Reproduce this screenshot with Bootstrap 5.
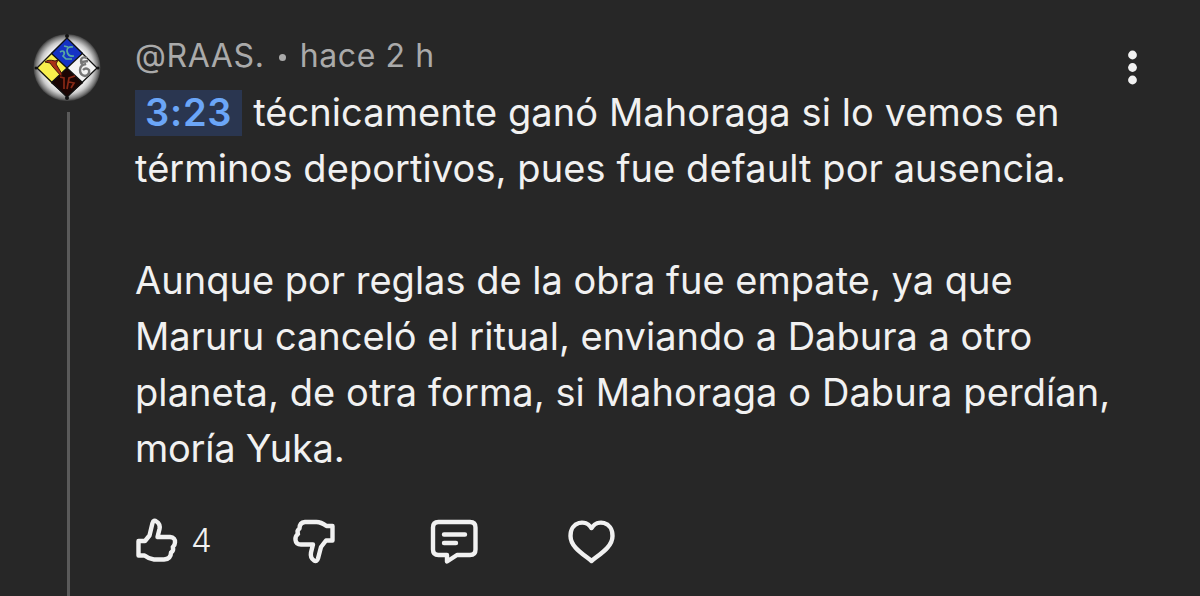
<!DOCTYPE html>
<html lang="es">
<head>
    <meta charset="UTF-8" />
    <meta name="viewport" content="width=device-width, initial-scale=1" />
    <title>Comentario</title>
    <link href="https://cdn.jsdelivr.net/npm/bootstrap@5.3.0/dist/css/bootstrap.min.css" rel="stylesheet" />
    <style>
        body {
            background: #272727;
            color: #f1f1f1;
            font-family: Inter, "Liberation Sans", sans-serif;
            overflow: hidden;
        }
        .comment { height: 596px; }
        .side { width: 135px; padding: 33px 0 0 33px; }
        .avatar { width: 70px; height: 70px; display: block; }
        .thread { width: 3px; margin: 9px 0 0 34px; background: #5a5a5a; }
        .byline {
            height: 50px;
            margin-top: 31px;
            font-size: 32px;
            line-height: 50px;
            letter-spacing: .6px;
            color: #aaa;
        }
        .dot { display: inline-block; width: 7px; height: 7px; margin: 0 4px 6px 5px; border-radius: 50%; background: #aaa; }
        .message { margin-top: 3px; font-size: 38px; line-height: 56px; white-space: nowrap; letter-spacing: .08px; }
        .message .even { letter-spacing: 0; }
        .message .tight { letter-spacing: -.25px; }
        .stamp {
            display: inline-block;
            height: 46px;
            line-height: 44px;
            padding: 0 10px;
            background: #2a3650;
            color: #6ba6f8;
            font-weight: 600;
            letter-spacing: .8px;
            text-decoration: none;
        }
        .actions { margin-top: 34px; height: 60px; }
        .actions svg {
            display: block;
            fill: none;
            stroke: #f1f1f1;
            stroke-width: 4.4;
            stroke-linejoin: round;
            stroke-linecap: round;
        }
        .likes { font-size: 33px; font-weight: 300; line-height: 61px; width: 82px; padding-left: 12px; }
        .more { width: 72px; padding-top: 46px; }
    </style>
</head>
<body>

<div class="comment d-flex">

    <div class="side d-flex flex-column flex-shrink-0">
        <svg class="avatar" viewBox="0 0 70 70">
            <defs>
                <radialGradient id="glow">
                    <stop offset=".62" stop-color="#fff" />
                    <stop offset=".8" stop-color="#c9c9c9" />
                    <stop offset=".93" stop-color="#777" />
                    <stop offset="1" stop-color="#3c3c3c" />
                </radialGradient>
            </defs>
            <circle cx="34" cy="34.500" r="33.500" fill="url(#glow)" />
            <path d="M34 5 50 20 34 35 18 20Z" fill="#1532c4" />
            <path d="M18 20 34 35 18 50 4 35Z" fill="#f8ef4c" />
            <path d="M50 20 64 35 50 50 34 35Z" fill="#f4f4f4" />
            <path d="M34 35 50 50 34 64 18 50Z" fill="#1b0503" />
            <path d="M34 5 64 35 34 64 4 35ZM18 20 50 50M50 20 18 50" fill="none" stroke="#111" stroke-width="1.300" />
            <path d="M40 14q-6-1-6 4 1 6 7 5M27 19q3-2 4 0t-1 4l3 3 6 0M31 13l4 1" fill="none" stroke="#5aa9a0" stroke-width="1.700" />
            <path d="M12 29q3-3 10-1l3-1-2 4 6 10-1 2-8-9-3-4Z" fill="#a93217" stroke="#42150c" />
            <path d="M54 25q-6-2-6 3t5 3q-6 1-6 6t5 6q5-1 4-6-3-3-6 0M49 29l6-1" fill="none" stroke="#777" stroke-width="2.400" />
            <path d="M27 44l4 1v11M42 43l-6 2-2 11M36 49l5 1-3 5" fill="none" stroke="#882916" stroke-width="1.700" />
            <g fill="#111">
                <circle cx="34" cy="3" r="2" />
                <circle cx="34" cy="65" r="2" />
                <circle cx="3" cy="35" r="1.500" />
                <circle cx="65" cy="35" r="1.500" />
            </g>
        </svg>
        <div class="thread flex-grow-1"></div>
    </div>

    <div class="flex-grow-1">
        <div class="byline">@RAAS. <span class="dot"></span> hace 2 h</div>

        <div class="message">
            <div><a class="stamp" href="#">3:23</a> técnicamente ganó Mahoraga si lo vemos en</div>
            <div>términos deportivos, pues fue default por ausencia.</div>
            <br>
            <div class="even">Aunque por reglas de la obra fue empate, ya que</div>
            <div class="even">Maruru canceló el ritual, enviando a Dabura a otro</div>
            <div>planeta, de otra forma, si Mahoraga o Dabura perdían,</div>
            <div class="tight">moría Yuka.</div>
        </div>

        <div class="actions d-flex">
            <svg width="44" height="60" viewBox="135 510 44 60"><path d="M138.500 541H145L149.500 535.500 152.500 523Q153.500 519.500 156.500 521.500 160.500 524 159.500 529L157.500 537H170Q175.500 537.500 175 542.500 174.800 545.500 172.800 547 174 551 171 552.500 171 559 164 559.500H154Q149 559 144.500 555.500H138.500Z" /></svg>
            <div class="likes">4</div>
            <svg width="76" height="60" viewBox="261 510 76 60"><path d="M332.500 526H326.500Q321 522 316.500 522H305Q299.500 522.500 299.500 528.500 296.500 530.500 298 534 295 536 295.500 540 296 544.500 301 544.500H313L311 552.500Q310 558 314 560.500 317 562 318 558.500L321 547 326 540.500H332.500Z" /></svg>
            <svg width="143" height="60" viewBox="337 510 143 60"><path d="M438.500 522H470Q475.500 522 475.500 527.500V549.500Q475.500 555 470 555H457L447 561.500V555H438.500Q433 555 433 549.500V527.500Q433 522 438.500 522ZM444 534.500H465M444 543H456" /></svg>
            <svg width="136" height="60" viewBox="480 510 136 60"><path d="M591.500 528C586 519 570.500 521 570.500 536 570.500 547 583 554 591.500 561 600 554 612.500 547 612.500 536 612.500 521 597 519 591.500 528Z" /></svg>
        </div>
    </div>

    <div class="more flex-shrink-0">
        <svg class="d-block" width="10" height="44" viewBox="0 0 10 44" fill="#f1f1f1"><circle cx="4.500" cy="9" r="4.400" /><circle cx="4.500" cy="21.500" r="4.400" /><circle cx="4.500" cy="34" r="4.400" /></svg>
    </div>

</div>

<script src="https://cdn.jsdelivr.net/npm/bootstrap@5.3.0/dist/js/bootstrap.bundle.min.js"></script>
</body>
</html>
